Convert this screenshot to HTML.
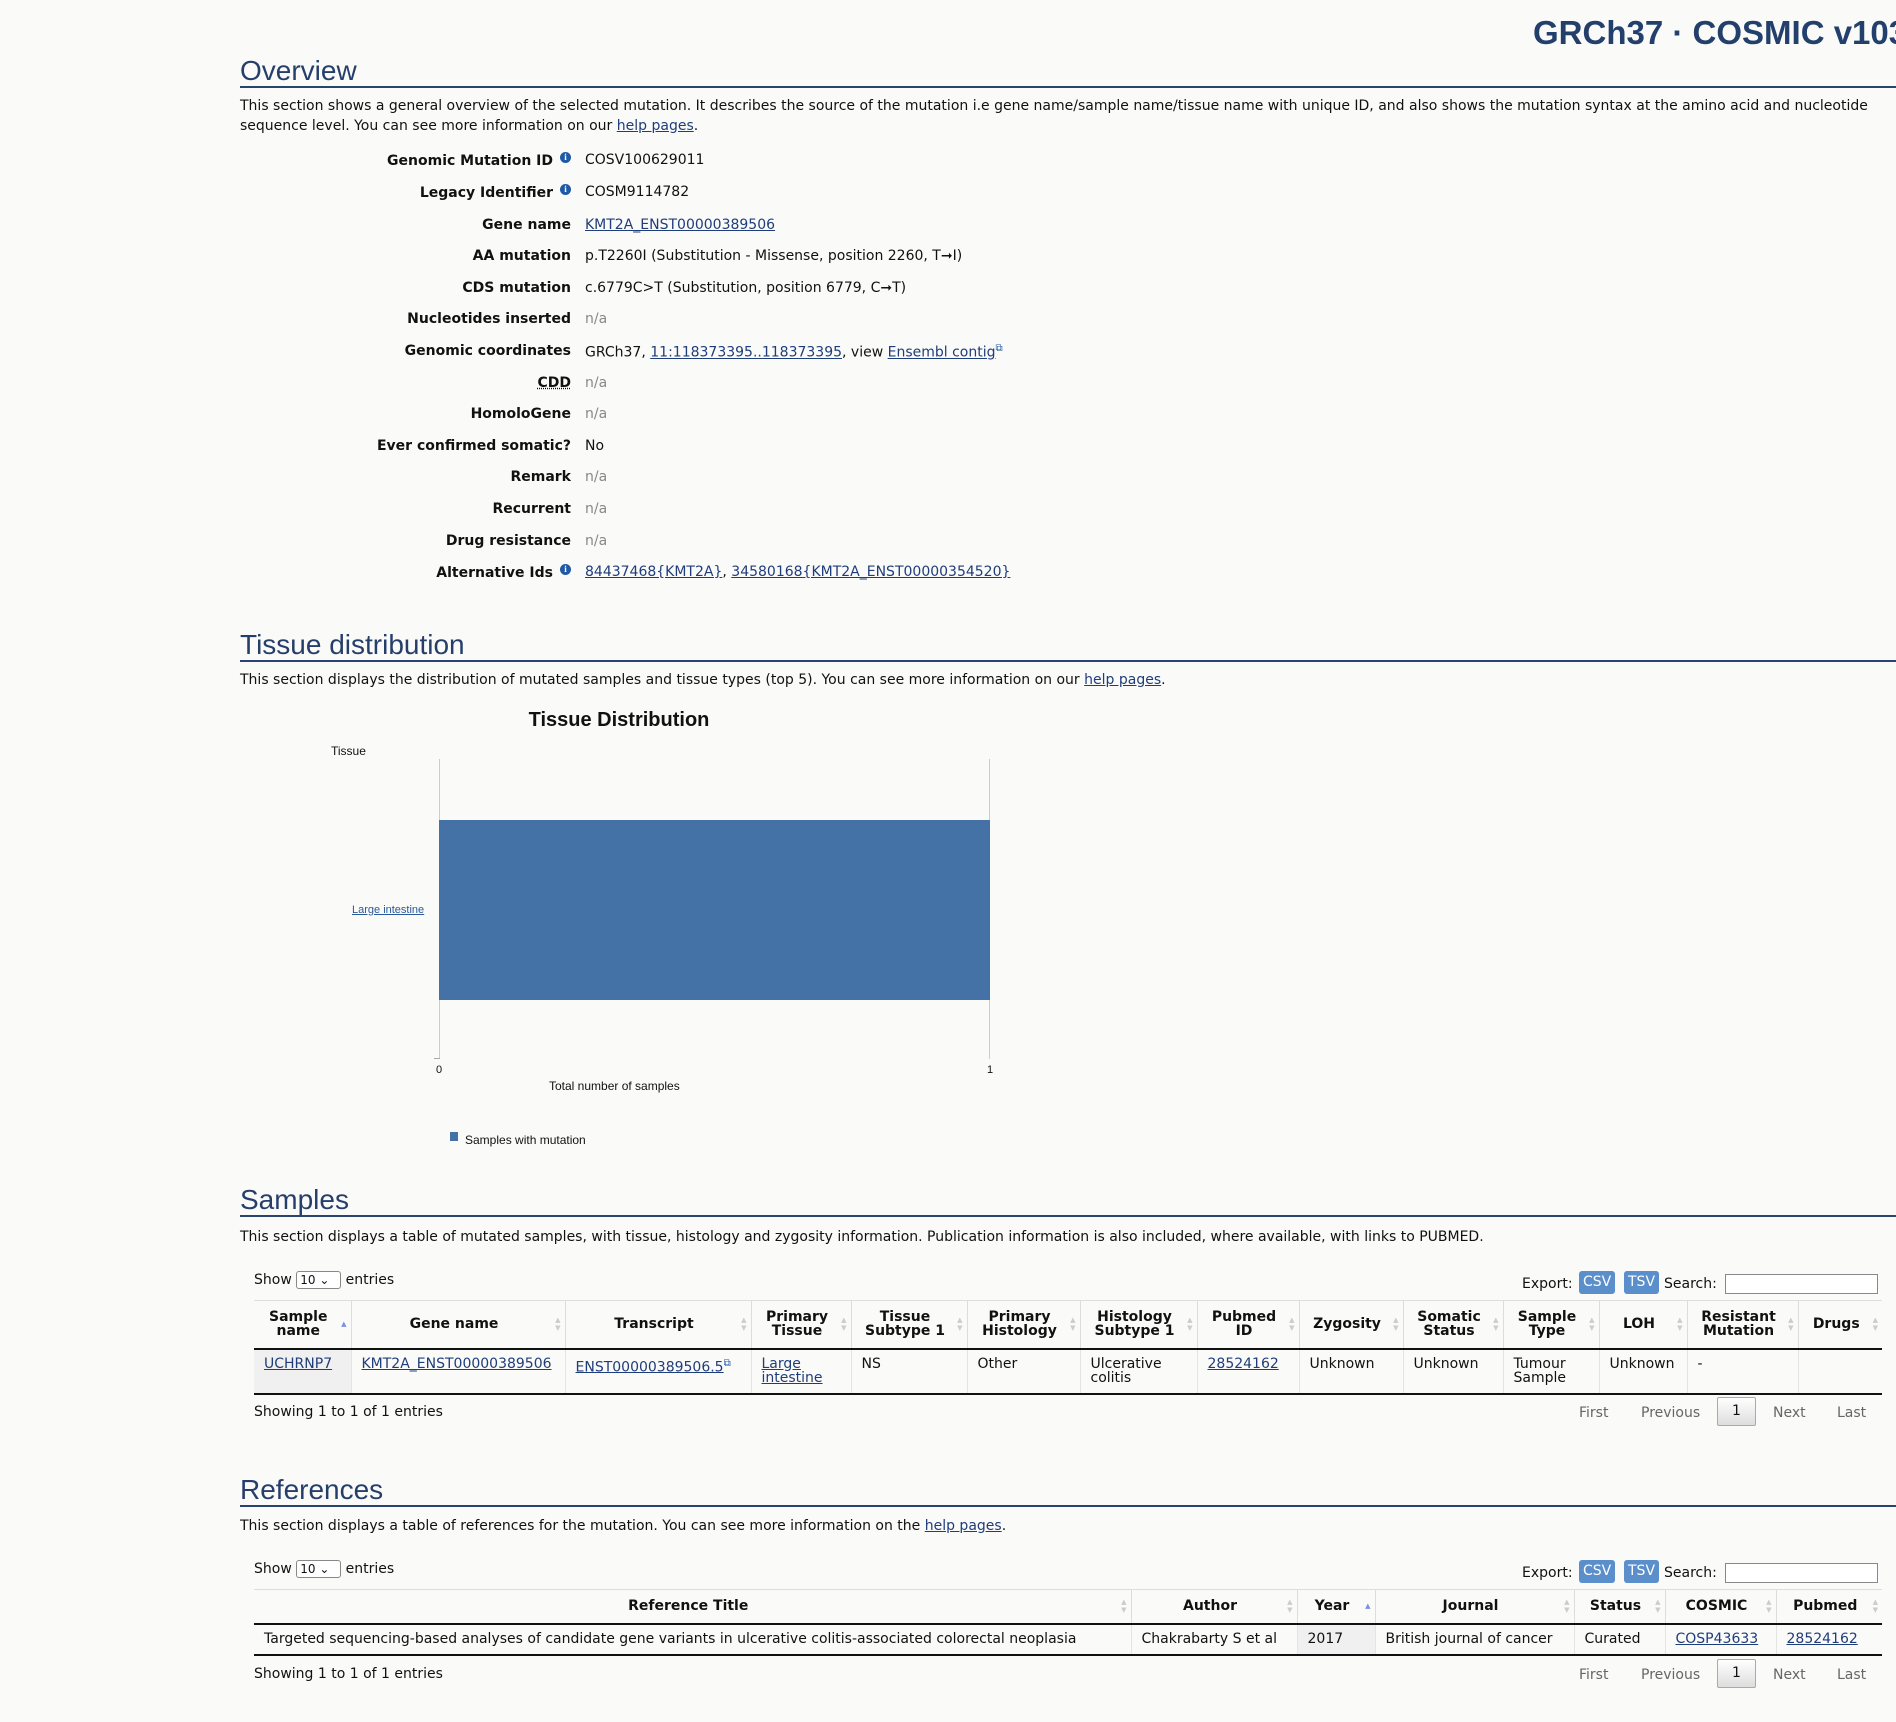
<!DOCTYPE html>
<html><head><meta charset="utf-8">
<style>
*{box-sizing:border-box;margin:0;padding:0}
body{width:1896px;height:1722px;background:#fafaf9;font-family:"DejaVu Sans","Liberation Sans",sans-serif;font-size:14px;color:#111;position:relative;overflow:hidden}
.abs{position:absolute}
a{color:#1f3d7a;text-decoration:underline}
h2{position:absolute;left:240px;right:0;font-family:"Liberation Sans",sans-serif;font-weight:400;font-size:28px;color:#263f6a;border-bottom:2px solid #2a446f;padding-top:3px;line-height:31px}
.p{position:absolute;left:240px;width:1650px;line-height:19.5px;margin-top:2px}
.lab{position:absolute;right:1325px;font-weight:bold;text-align:right;white-space:nowrap;margin-top:3px}
.val{position:absolute;left:585px;white-space:nowrap;margin-top:3px}
.na{color:#888}
.ic{display:inline-block;width:11px;height:11px;border-radius:50%;background:#1f5aa6;color:#fff;font-size:9px;line-height:11px;text-align:center;font-weight:bold;vertical-align:5px;margin-left:7px;font-family:"Liberation Serif",serif}
table{border-collapse:collapse;table-layout:fixed;position:absolute;left:254px;width:1628px}
th{font-weight:bold;text-align:center;vertical-align:middle;border-right:1px solid #ddd;border-bottom:2px solid #111;border-top:1px solid #ddd;line-height:14px;position:relative;padding:0 14px 0 6px}
th:after{content:"▲\A▼";white-space:pre;position:absolute;right:4px;top:50%;transform:translateY(-50%);font-size:7px;line-height:8px;color:#ccc}
th.asc:after{content:"▲\A ";color:#7d8fe0}
td{vertical-align:top;border-right:1px solid #e4e4e4;padding:7px 10px 3px;line-height:14px;border-bottom:2px solid #111}
th:last-child,td:last-child{border-right:none}
.btn{position:absolute;background:#5b8fcb;color:#fff;border-radius:3px;height:23px;line-height:23px;padding:0 4px;font-size:14px}
.inp{position:absolute;width:153px;height:20px;border:1px solid #888;background:#fff}
.sel{display:inline-block;border:1px solid #888;border-radius:3px;background:#fff;width:45px;height:18px;font-size:12px;line-height:16px;padding-left:3px;vertical-align:middle}
.pg{position:absolute;color:#666}
.pgb{position:absolute;width:39px;height:29px;border:1px solid #aaa;background:linear-gradient(#fff,#ddd);text-align:center;line-height:27px;border-radius:2px}
</style></head><body>

<div class="abs" style="left:1533px;top:14px;font-family:'Liberation Sans',sans-serif;font-size:33px;font-weight:bold;color:#233f6b;white-space:nowrap">GRCh37 · COSMIC v103</div>

<h2 style="top:52px">Overview</h2>
<div class="p" style="top:95px">This section shows a general overview of the selected mutation. It describes the source of the mutation i.e gene name/sample name/tissue name with unique ID, and also shows the mutation syntax at the amino acid and nucleotide sequence level. You can see more information on our <a>help pages</a>.</div>

<div class="lab" style="top:149px">Genomic Mutation ID<span class="ic">i</span></div><div class="val" style="top:149px">COSV100629011</div>
<div class="lab" style="top:181px">Legacy Identifier<span class="ic">i</span></div><div class="val" style="top:181px">COSM9114782</div>
<div class="lab" style="top:214px">Gene name</div><div class="val" style="top:214px"><a>KMT2A_ENST00000389506</a></div>
<div class="lab" style="top:245px">AA mutation</div><div class="val" style="top:245px">p.T2260I (Substitution - Missense, position 2260, T➞I)</div>
<div class="lab" style="top:277px">CDS mutation</div><div class="val" style="top:277px">c.6779C&gt;T (Substitution, position 6779, C➞T)</div>
<div class="lab" style="top:308px">Nucleotides inserted</div><div class="val na" style="top:308px">n/a</div>
<div class="lab" style="top:340px">Genomic coordinates</div><div class="val" style="top:340px">GRCh37, <a>11:118373395..118373395</a>, view <a>Ensembl contig</a><sup style="color:#1f5aa6;font-size:10px">⧉</sup></div>
<div class="lab" style="top:372px;text-decoration:underline dotted">CDD</div><div class="val na" style="top:372px">n/a</div>
<div class="lab" style="top:403px">HomoloGene</div><div class="val na" style="top:403px">n/a</div>
<div class="lab" style="top:435px">Ever confirmed somatic?</div><div class="val" style="top:435px">No</div>
<div class="lab" style="top:466px">Remark</div><div class="val na" style="top:466px">n/a</div>
<div class="lab" style="top:498px">Recurrent</div><div class="val na" style="top:498px">n/a</div>
<div class="lab" style="top:530px">Drug resistance</div><div class="val na" style="top:530px">n/a</div>
<div class="lab" style="top:561px">Alternative Ids<span class="ic">i</span></div><div class="val" style="top:561px"><a>84437468{KMT2A}</a>, <a>34580168{KMT2A_ENST00000354520}</a></div>

<h2 style="top:626px">Tissue distribution</h2>
<div class="p" style="top:669px">This section displays the distribution of mutated samples and tissue types (top 5). You can see more information on our <a>help pages</a>.</div>

<div class="abs" style="left:419px;width:400px;top:709px;text-align:center;font-family:'Liberation Sans',sans-serif;font-weight:bold;font-size:20px">Tissue Distribution</div>
<div class="abs" style="left:331px;top:744px;font-family:'Liberation Sans',sans-serif;font-size:12px">Tissue</div>
<div class="abs" style="left:439px;top:759px;width:1px;height:300px;background:#ccc"></div>
<div class="abs" style="left:989px;top:759px;width:1px;height:300px;background:#ccc"></div>
<div class="abs" style="left:434px;top:1058px;width:6px;height:1px;background:#aaa"></div>
<div class="abs" style="left:439px;top:820px;width:551px;height:180px;background:#4472a6"></div>
<div class="abs" style="left:352px;top:904px;font-family:'Liberation Sans',sans-serif;font-size:11px"><a style="color:#2a5a9a">Large intestine</a></div>
<div class="abs" style="left:436px;top:1064px;font-family:'Liberation Sans',sans-serif;font-size:11px">0</div>
<div class="abs" style="left:987px;top:1064px;font-family:'Liberation Sans',sans-serif;font-size:11px">1</div>
<div class="abs" style="left:549px;top:1079px;font-family:'Liberation Sans',sans-serif;font-size:12px">Total number of samples</div>
<div class="abs" style="left:450px;top:1132px;width:8px;height:9px;background:#4472a6"></div>
<div class="abs" style="left:465px;top:1133px;font-family:'Liberation Sans',sans-serif;font-size:12px">Samples with mutation</div>

<h2 style="top:1181px">Samples</h2>
<div class="p" style="top:1226px">This section displays a table of mutated samples, with tissue, histology and zygosity information. Publication information is also included, where available, with links to PUBMED.</div>

<div class="abs" style="left:254px;top:1271px">Show <span class="sel">10 ⌄</span> entries</div>
<div class="abs" style="left:1522px;top:1276px">Export:</div>
<div class="btn" style="left:1579px;top:1271px">CSV</div>
<div class="btn" style="left:1624px;top:1271px">TSV</div>
<div class="abs" style="left:1664px;top:1276px">Search:</div>
<div class="inp" style="left:1725px;top:1274px"></div>

<table style="top:1300px">
<colgroup><col style="width:97px"><col style="width:214px"><col style="width:186px"><col style="width:100px"><col style="width:116px"><col style="width:113px"><col style="width:117px"><col style="width:102px"><col style="width:104px"><col style="width:100px"><col style="width:96px"><col style="width:88px"><col style="width:111px"><col style="width:84px"></colgroup>
<tr style="height:48px"><th class="asc">Sample name</th><th>Gene name</th><th>Transcript</th><th>Primary Tissue</th><th>Tissue Subtype 1</th><th>Primary Histology</th><th>Histology Subtype 1</th><th>Pubmed ID</th><th>Zygosity</th><th>Somatic Status</th><th>Sample Type</th><th>LOH</th><th>Resistant Mutation</th><th>Drugs</th></tr>
<tr style="height:45px"><td style="background:#f0f0f0"><a>UCHRNP7</a></td><td><a>KMT2A_ENST00000389506</a></td><td><a>ENST00000389506.5</a><sup style="color:#1f5aa6;font-size:10px">⧉</sup></td><td><a>Large intestine</a></td><td>NS</td><td>Other</td><td>Ulcerative colitis</td><td><a>28524162</a></td><td>Unknown</td><td>Unknown</td><td>Tumour Sample</td><td>Unknown</td><td>-</td><td></td></tr>
</table>

<div class="abs" style="left:254px;top:1404px">Showing 1 to 1 of 1 entries</div>
<div class="pg" style="left:1579px;top:1405px">First</div>
<div class="pg" style="left:1641px;top:1405px">Previous</div>
<div class="pgb" style="left:1717px;top:1397px">1</div>
<div class="pg" style="left:1773px;top:1405px">Next</div>
<div class="pg" style="left:1837px;top:1405px">Last</div>

<h2 style="top:1471px">References</h2>
<div class="p" style="top:1515px">This section displays a table of references for the mutation. You can see more information on the <a>help pages</a>.</div>

<div class="abs" style="left:254px;top:1560px">Show <span class="sel">10 ⌄</span> entries</div>
<div class="abs" style="left:1522px;top:1565px">Export:</div>
<div class="btn" style="left:1579px;top:1560px">CSV</div>
<div class="btn" style="left:1624px;top:1560px">TSV</div>
<div class="abs" style="left:1664px;top:1565px">Search:</div>
<div class="inp" style="left:1725px;top:1563px"></div>

<table style="top:1589px">
<colgroup><col style="width:877px"><col style="width:166px"><col style="width:78px"><col style="width:199px"><col style="width:91px"><col style="width:111px"><col style="width:106px"></colgroup>
<tr style="height:34px"><th>Reference Title</th><th>Author</th><th class="asc">Year</th><th>Journal</th><th>Status</th><th>COSMIC</th><th>Pubmed</th></tr>
<tr style="height:31px"><td style="white-space:nowrap">Targeted sequencing-based analyses of candidate gene variants in ulcerative colitis-associated colorectal neoplasia</td><td>Chakrabarty S et al</td><td style="background:#f0f0f0">2017</td><td>British journal of cancer</td><td>Curated</td><td><a>COSP43633</a></td><td><a>28524162</a></td></tr>
</table>

<div class="abs" style="left:254px;top:1666px">Showing 1 to 1 of 1 entries</div>
<div class="pg" style="left:1579px;top:1667px">First</div>
<div class="pg" style="left:1641px;top:1667px">Previous</div>
<div class="pgb" style="left:1717px;top:1659px">1</div>
<div class="pg" style="left:1773px;top:1667px">Next</div>
<div class="pg" style="left:1837px;top:1667px">Last</div>

</body></html>
